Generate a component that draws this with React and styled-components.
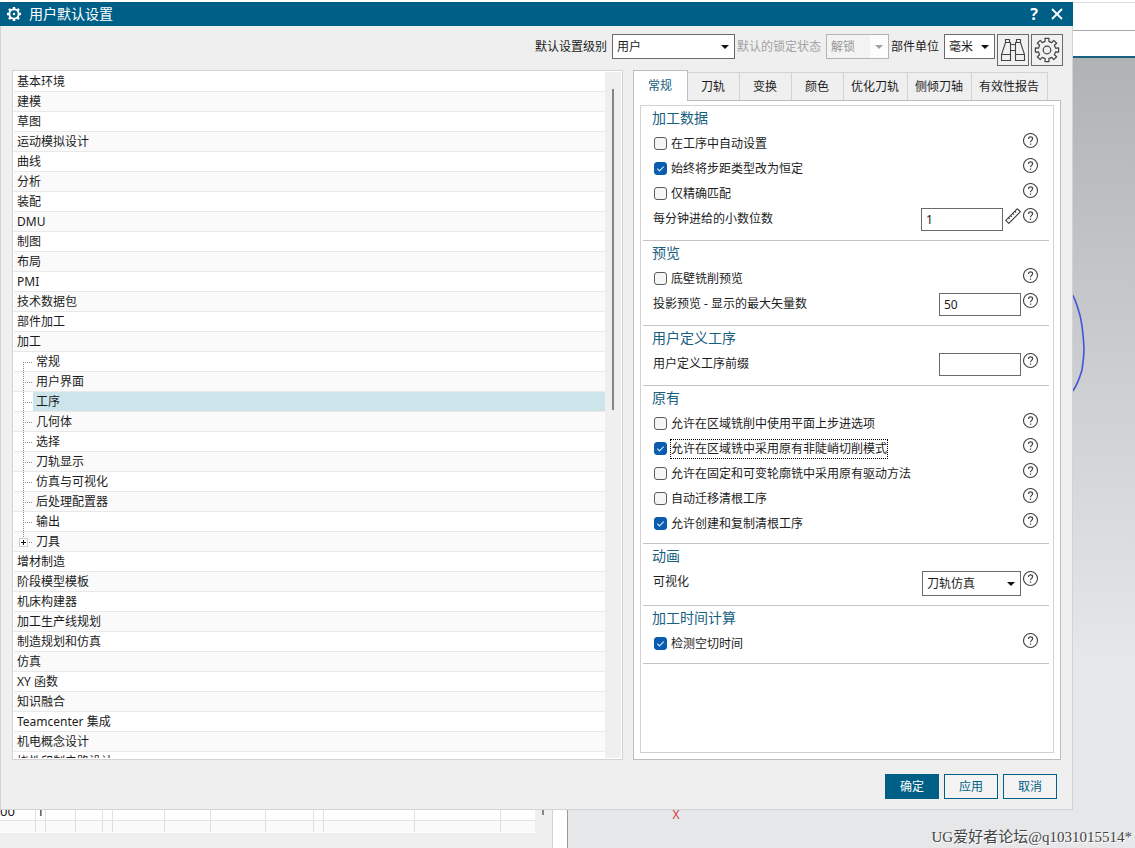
import React from "react";
import styled, { createGlobalStyle, css } from "styled-components";

const color = {
  accent: "#005f87",
  heading: "#17607f",
  text: "#1c1c1c",
  face: "#efefef",
  line: "#d2d2d2",
  field: "#6a6a6a",
};

const GlobalStyle = createGlobalStyle`
  * { box-sizing: border-box; }
  body {
    margin: 0;
    overflow: hidden;
    font: 12px/16px "Noto Sans", "Noto Sans CJK SC", sans-serif;
    color: ${color.text};
  }
  button, input, select { font: inherit; color: inherit; margin: 0; }
`;

/* ---------- application behind the dialog ---------- */

const Desktop = styled.div`
  display: grid;
  grid-template: minmax(0, 1fr) / minmax(0, 1fr);
  height: 100vh;
  & > * { grid-area: 1 / 1; }
`;

const Backdrop = styled.div`
  display: flex;
  flex-direction: column;
  min-height: 0;
  background: #fff;
`;

const Ribbon = styled.div`
  height: 29px;
  flex: none;
  margin-top: 2px;
  border-top: 1px solid #dcdcdc;
  border-bottom: 1px solid #a8a8a8;
`;

const RibbonBottom = styled.div`
  height: 27px;
  flex: none;
  border-bottom: 2px solid #17607f;
`;

const Workspace = styled.div`
  flex: 1;
  min-height: 0;
  display: flex;
`;

const Navigator = styled.div`
  flex: 0 0 50%;
  display: flex;
  align-items: stretch;
`;

const NavTable = styled.div`
  flex: 1;
  display: flex;
  flex-direction: column;
  justify-content: flex-end;
  padding-bottom: 15px;
  background: ${color.face};
`;

const NavRow = styled.div`
  display: grid;
  grid-template-columns: 36px 10px 30px 27px 10px 52px 46px 55px 48px 10px 91px 86px 1fr;
  height: ${(p) => (p.$last ? 12 : 20)}px;
  background: ${(p) => (p.$last ? "#fafafa" : "#fff")};
  border-bottom: 1px solid ${(p) => (p.$last ? "#fff" : "#e4e4e4")};
  font-size: 13px;
  line-height: 20px;
`;

const NavCell = styled.span`
  border-right: 1px solid #e0e0e0;
  overflow: hidden;
  text-align: ${(p) => (p.$center ? "center" : "left")};
  &:last-child { border-right: 0; }
`;

const NavScroll = styled.div`
  width: 17px;
  background: ${color.face};
  display: flex;
  justify-content: center;
  align-items: flex-end;
  padding-bottom: 33px;
  &::before {
    content: "";
    width: 2px;
    height: 200px;
    background: #888;
  }
`;

const NavEdge = styled.div`
  width: 16px;
  background: #fff;
  border-left: 1px solid ${color.line};
  border-right: 1px solid #9a9a9a;
`;

const Viewport = styled.div`
  flex: 1;
  position: relative;
  background: linear-gradient(#b1b2b4, #dcdde0 62%, #e6e7e9 76%);
`;

const SketchArc = styled.svg`
  position: absolute;
  right: 45px;
  top: 230px;
`;

const AxisLabel = styled.span`
  position: absolute;
  left: 105px;
  bottom: 25px;
  font-size: 12px;
  color: #d03c3c;
`;

const Watermark = styled.span`
  position: absolute;
  right: 3px;
  bottom: 1px;
  font: 15px/20px "Liberation Serif", "Noto Sans CJK SC", serif;
  color: #444;
  text-shadow: 1px 1px 0 #fff;
  white-space: nowrap;
`;

/* ---------- dialog frame ---------- */

const Dialog = styled.form`
  display: flex;
  flex-direction: column;
  min-height: 0;
  margin: 2px 62px 38px 0;
  background: ${color.face};
  border: solid ${color.line};
  border-width: 0 1px 1px;
  z-index: 1;
`;

const TitleBar = styled.header`
  display: flex;
  align-items: center;
  flex: none;
  height: 24px;
  margin: 0 -1px;
  padding: 0 8px 0 6px;
  background: ${color.accent};
  color: #fff;
`;

const Title = styled.h1`
  flex: 1;
  margin: 0 0 0 7px;
  font-size: 14px;
  font-weight: 400;
  line-height: 24px;
`;

const TitleButton = styled.button`
  display: grid;
  place-items: center;
  width: 16px;
  height: 20px;
  margin-left: 7px;
  padding: 0;
  border: 0;
  background: none;
  font-size: 16px;
  font-weight: 700;
  line-height: 20px;
`;

const Toolbar = styled.div`
  display: flex;
  justify-content: flex-end;
  align-items: flex-start;
  gap: 2px;
  flex: none;
  padding: 8px 9px 4px;
`;

const ToolLabel = styled.label`
  display: flex;
  align-items: center;
  gap: 5px;
  height: 25px;
  white-space: nowrap;
  color: ${(p) => (p.$disabled ? "#a2a2a2" : "inherit")};
`;

const ToolButton = styled.button`
  width: 32px;
  height: 32px;
  padding: 0;
  border: 1px solid ${color.field};
  background: #f1f1f1;
  svg { display: block; }
`;

const SelectBox = styled.span`
  display: grid;
  align-items: center;
  width: ${(p) => p.$width}px;
  & > * { grid-area: 1 / 1; }
  svg {
    justify-self: end;
    margin-right: 6px;
    pointer-events: none;
  }
`;

const SelectField = styled.select`
  appearance: none;
  width: 100%;
  height: 25px;
  padding: 0 4px;
  border: 1px solid ${color.field};
  border-radius: 0;
  background: #fff;
  &:disabled {
    border-color: #b4b4b4;
    background: linear-gradient(to right, #f3f3f3 70%, #fcfcfc 70%);
    color: #969696;
    opacity: 1;
  }
`;

const Panels = styled.div`
  flex: 1;
  min-height: 0;
  display: grid;
  grid-template: minmax(0, 1fr) / minmax(0, 1fr) 428px;
  gap: 10px;
  padding: 0 11px;
`;

const Footer = styled.footer`
  display: flex;
  justify-content: flex-end;
  gap: 5px;
  flex: none;
  padding: 14px 15px 10px;
`;

const ActionButton = styled.button`
  width: 54px;
  height: 25px;
  padding: 0;
  border: 1px solid ${color.accent};
  background: ${(p) => (p.$primary ? color.accent : "#f3f3f3")};
  color: ${(p) => (p.$primary ? "#fff" : color.accent)};
`;

/* ---------- category tree ---------- */

const TreePanel = styled.div`
  display: flex;
  min-height: 0;
  padding: 1px;
  border: 1px solid ${color.line};
  background: #fff;
`;

const TreeList = styled.ul`
  flex: 1;
  min-width: 0;
  margin: 0;
  padding: 0;
  list-style: none;
  overflow: hidden;
`;

const TreeRow = styled.li`
  display: flex;
  height: 20px;
  border-bottom: 1px solid #e9e9e9;
  line-height: 19px;
  &:nth-child(even) { background: #fafafa; }
`;

const TreeLabel = styled.span`
  flex: 1;
  padding-left: 3px;
  margin-left: ${(p) => (p.$child ? 1 : 0)}px;
  background: ${(p) => (p.$selected ? "#cde5ea" : "none")};
`;

const dots = "#8c8c8c 0 1px, transparent 1px 2px";

const Guide = styled.span`
  display: flex;
  align-items: center;
  width: 13px;
  height: 20px;
  margin-left: 5px;
  background-image:
    repeating-linear-gradient(to bottom, ${dots}),
    repeating-linear-gradient(to right, ${dots});
  background-repeat: no-repeat;
  background-size: 1px 20px, 9px 1px;
  background-position: 4px 0, 4px 10px;
  ${(p) => p.$first && css`
    background-size: 1px 10px, 9px 1px;
    background-position: 4px 10px, 4px 10px;
  `}
  ${(p) => p.$last && css`
    background-size: 1px 10px, 9px 1px;
  `}
`;

const Expander = styled.button`
  display: block;
  width: 9px;
  height: 9px;
  padding: 0;
  border: 1px solid #cfcfcf;
  background: #fff;
  svg { display: block; }
`;

const TreeScroll = styled.div`
  width: 16px;
  padding: 17px 0 0 7px;
  background: ${color.face};
  &::before {
    content: "";
    display: block;
    width: 2px;
    height: 48%;
    background: #858585;
  }
`;

/* ---------- settings pane ---------- */

const SettingsPanel = styled.div`
  display: flex;
  flex-direction: column;
  min-height: 0;
`;

const TabStrip = styled.div`
  display: flex;
  align-items: flex-end;
  flex: none;
  height: 31px;
  z-index: 1;
`;

const Tab = styled.button`
  min-width: 52px;
  height: 28px;
  margin-bottom: 1px;
  padding: 0 8px 0 7px;
  border: solid ${color.line};
  border-width: 1px 1px 0 0;
  background: ${color.face};
  white-space: nowrap;
  ${(p) => p.$active && css`
    width: 55px;
    height: 31px;
    margin-bottom: 0;
    border-color: #bdbdbd;
    border-width: 1px 1px 0 1px;
    background: #fff;
    color: ${color.heading};
  `}
`;

const TabBody = styled.div`
  flex: 1;
  min-height: 0;
  display: flex;
  margin-top: -1px;
  padding: 4px 6px 6px;
  border: 1px solid #bdbdbd;
  background: #fff;
`;

const SettingsFrame = styled.div`
  flex: 1;
  padding: 0 4px 0 2px;
  border: 1px solid ${color.line};
  overflow: hidden;
`;

const Section = styled.section`
  padding: 0 10px 7px 9px;
  border-bottom: 1px solid #c4c4c4;
`;

const SectionTitle = styled.h2`
  margin: 0;
  padding-bottom: 2px;
  font-size: 14px;
  font-weight: 400;
  line-height: 23px;
  color: ${color.heading};
`;

const SettingRow = styled.div`
  display: flex;
  align-items: flex-start;
  gap: 2px;
`;

const FieldLabel = styled.label`
  flex: 1;
  padding-left: 1px;
  line-height: 25px;
`;

const Control = styled.span`
  padding: 2px 0;
`;

const TextField = styled.input`
  display: block;
  width: 82px;
  height: 23px;
  padding: 0 4px;
  border: 1px solid ${color.field};
  border-radius: 0;
  background: #fff;
`;

const CheckLabel = styled.label`
  display: flex;
  align-items: center;
  gap: 4px;
  height: 25px;
  margin-right: auto;
  padding-left: 2px;
`;

const CheckBox = styled.span`
  display: grid;
  & > * { grid-area: 1 / 1; }
  svg { pointer-events: none; }
`;

const CheckInput = styled.input`
  appearance: none;
  width: 13px;
  height: 13px;
  border: 1px solid #5c5c5c;
  border-radius: 3px;
  background: #f5f5f5;
  &:checked {
    border-color: #0a5cb0;
    background: #0a5cb0;
  }
`;

const CheckText = styled.span`
  line-height: 18px;
  ${(p) => p.$focused && css`
    outline: 1px dotted #000;
  `}
`;

const IconButton = styled.button`
  width: 16px;
  height: 16px;
  margin-top: 2px;
  padding: 0;
  border: 0;
  background: none;
  svg { display: block; }
`;

/* ---------- icons ---------- */

function gearPoints(cx, cy, inner, outer) {
  const points = [];
  for (let i = 0; i < 8; i += 1) {
    [[-12, inner], [-10, outer], [10, outer], [12, inner]].forEach(([deg, r]) => {
      const a = ((i * 45 + deg) * Math.PI) / 180;
      points.push(`${(cx + r * Math.cos(a)).toFixed(2)},${(cy + r * Math.sin(a)).toFixed(2)}`);
    });
  }
  return points.join(" ");
}

const TitleGear = () => (
  <svg width="16" height="16" viewBox="0 0 16 16" aria-hidden="true">
    <polygon points={gearPoints(8, 8, 5.6, 7.2)} fill="#fff" />
    <circle cx="8" cy="8" r="3.7" fill={color.accent} />
    <circle cx="8" cy="8" r="1.2" fill="#fff" />
  </svg>
);

const GearIcon = () => (
  <svg width="30" height="30" viewBox="0 0 30 30" fill="none" stroke="#444" strokeWidth="1.2" strokeLinejoin="round" aria-hidden="true">
    <polygon points={gearPoints(15, 15, 8.8, 11.8)} />
    <circle cx="15" cy="15" r="3.8" />
  </svg>
);

const BinocularsIcon = () => (
  <svg width="30" height="30" viewBox="0 0 30 30" fill="none" stroke="#444" strokeWidth="1.1" aria-hidden="true">
    <path d="M7.500 7.500v-3h4v3M12.500 25.500v-18h-5L3.500 19.500v6zM3.500 19.500h9M22.500 7.500v-3h-4v3M17.500 25.500v-18h5L26.500 19.500v6zM26.500 19.500h-9M12.500 9.500h5M12.500 15.500h5" />
  </svg>
);

const ArrowIcon = ({ fill = "#111" }) => (
  <svg width="8" height="4" viewBox="0 0 8 4" aria-hidden="true">
    <path d="M0 0h8L4 4z" fill={fill} />
  </svg>
);

const HelpIcon = () => (
  <svg width="16" height="16" viewBox="0 0 16 16" fill="none" stroke="#444" aria-hidden="true">
    <circle cx="7.5" cy="7.5" r="7" strokeWidth="1.1" />
    <path d="M5.500 5.900C5.500 4.600 6.300 3.900 7.500 3.900s2.100.7 2.100 1.800c0 1.700-2.100 1.700-2.100 3.600" strokeWidth="1.200" />
    <path d="M7.500 10.500v1.300" strokeWidth="1.300" />
  </svg>
);

const RulerIcon = () => (
  <svg width="16" height="16" viewBox="0 0 16 16" fill="none" stroke="#444" strokeWidth="1.2" strokeLinejoin="round" aria-hidden="true">
    <path d="M.8 12.300 12.200.8l3.200 2.900L3.800 15.300z" />
    <path d="M3.400 9.700l1.300 1.200M5.500 7.600l1.300 1.200M7.600 5.400l1.300 1.200M9.800 3.300l1.300 1.200" />
  </svg>
);

const CloseIcon = () => (
  <svg width="12" height="12" viewBox="0 0 12 12" stroke="#fff" strokeWidth="1.800" aria-hidden="true">
    <path d="M1 1l10 10M11 1L1 11" />
  </svg>
);

/* ---------- data ---------- */

const beforeMachining = [
  "基本环境", "建模", "草图", "运动模拟设计", "曲线", "分析", "装配", "DMU", "制图",
  "布局", "PMI", "技术数据包", "部件加工", "加工",
];
const machining = [
  "常规", "用户界面", "工序", "几何体", "选择", "刀轨显示", "仿真与可视化",
  "后处理配置器", "输出", "刀具",
];
const afterMachining = [
  "增材制造", "阶段模型模板", "机床构建器", "加工生产线规划", "制造规划和仿真", "仿真",
  "XY 函数", "知识融合", "Teamcenter 集成", "机电概念设计", "挠性印制电路设计",
];
const categories = [
  ...beforeMachining.map((name) => ({ name })),
  ...machining.map((name, i) => ({
    name,
    child: true,
    first: i === 0,
    last: i === machining.length - 1,
    selected: name === "工序",
  })),
  ...afterMachining.map((name) => ({ name })),
];

const tabs = ["常规", "刀轨", "变换", "颜色", "优化刀轨", "侧倾刀轴", "有效性报告"];

const sections = [
  {
    title: "加工数据",
    rows: [
      { type: "check", label: "在工序中自动设置" },
      { type: "check", label: "始终将步距类型改为恒定", checked: true },
      { type: "check", label: "仅精确匹配" },
      { type: "text", label: "每分钟进给的小数位数", value: "1", ruler: true },
    ],
  },
  {
    title: "预览",
    rows: [
      { type: "check", label: "底壁铣削预览" },
      { type: "text", label: "投影预览 - 显示的最大矢量数", value: "50" },
    ],
  },
  {
    title: "用户定义工序",
    rows: [{ type: "text", label: "用户定义工序前缀", value: "" }],
  },
  {
    title: "原有",
    rows: [
      { type: "check", label: "允许在区域铣削中使用平面上步进选项" },
      { type: "check", label: "允许在区域铣中采用原有非陡峭切削模式", checked: true, focused: true },
      { type: "check", label: "允许在固定和可变轮廓铣中采用原有驱动方法" },
      { type: "check", label: "自动迁移清根工序" },
      { type: "check", label: "允许创建和复制清根工序", checked: true },
    ],
  },
  {
    title: "动画",
    rows: [{ type: "select", label: "可视化", value: "刀轨仿真" }],
  },
  {
    title: "加工时间计算",
    rows: [{ type: "check", label: "检测空切时间", checked: true }],
  },
];

/* ---------- composed parts ---------- */

function Select({ id, value, width, disabled }) {
  return (
    <SelectBox $width={width}>
      <SelectField id={id} defaultValue={value} disabled={disabled}>
        <option>{value}</option>
      </SelectField>
      <ArrowIcon fill={disabled ? "#a0a0a0" : "#111"} />
    </SelectBox>
  );
}

function Check({ label, checked, focused }) {
  return (
    <CheckLabel>
      <CheckBox>
        <CheckInput type="checkbox" defaultChecked={checked} />
        {checked && (
          <svg width="13" height="13" viewBox="0 0 13 13" fill="none" stroke="#d8e9fa" strokeWidth="1.100" aria-hidden="true">
            <path d="M3.300 6.700l2.200 2.200 4.200-4.200" />
          </svg>
        )}
      </CheckBox>
      <CheckText $focused={focused}>{label}</CheckText>
    </CheckLabel>
  );
}

function Setting({ row, id }) {
  return (
    <SettingRow>
      {row.type === "check" ? <Check {...row} /> : <FieldLabel htmlFor={id}>{row.label}</FieldLabel>}
      {row.type === "text" && <Control><TextField id={id} type="text" defaultValue={row.value} /></Control>}
      {row.type === "select" && <Control><Select id={id} value={row.value} width={99} /></Control>}
      {row.ruler && <IconButton type="button" aria-label="测量"><RulerIcon /></IconButton>}
      <IconButton type="button" aria-label="帮助"><HelpIcon /></IconButton>
    </SettingRow>
  );
}

function Background() {
  return (
    <Backdrop>
      <Ribbon />
      <RibbonBottom />
      <Workspace>
        <Navigator>
          <NavTable>
            {[false, true].map((last) => (
              <NavRow key={String(last)} $last={last}>
                {Array.from({ length: 13 }, (_, i) => (
                  <NavCell key={i} $center={i === 1}>
                    {!last && i === 0 ? "00" : !last && i === 1 ? "1" : ""}
                  </NavCell>
                ))}
              </NavRow>
            ))}
          </NavTable>
          <NavScroll />
          <NavEdge />
        </Navigator>
        <Viewport>
          <SketchArc width="18" height="110" viewBox="0 0 18 110" fill="none" stroke="#3f55d8" strokeWidth="1.600" aria-hidden="true">
            <path d="M0 6 C3 11 5 17 7 24 C10 33 11 43 12 60 C12 68 11 75 10 82 C7 92 5 98 0 104" />
          </SketchArc>
          <AxisLabel>X</AxisLabel>
          <Watermark>UG爱好者论坛@q1031015514*</Watermark>
        </Viewport>
      </Workspace>
    </Backdrop>
  );
}

export default function App() {
  return (
    <>
      <GlobalStyle />
      <Desktop>
        <Background />
        <Dialog onSubmit={(e) => e.preventDefault()}>
          <TitleBar>
            <TitleGear />
            <Title>用户默认设置</Title>
            <TitleButton type="button" aria-label="帮助">?</TitleButton>
            <TitleButton type="button" aria-label="关闭"><CloseIcon /></TitleButton>
          </TitleBar>
          <Toolbar>
            <ToolLabel>默认设置级别<Select value="用户" width={123} /></ToolLabel>
            <ToolLabel $disabled>默认的锁定状态<Select value="解锁" width={63} disabled /></ToolLabel>
            <ToolLabel>部件单位<Select value="毫米" width={51} /></ToolLabel>
            <ToolButton type="button" aria-label="查找"><BinocularsIcon /></ToolButton>
            <ToolButton type="button" aria-label="管理设置"><GearIcon /></ToolButton>
          </Toolbar>
          <Panels>
            <TreePanel>
              <TreeList>
                {categories.map((c) => (
                  <TreeRow key={`${c.name}${c.child ? "-sub" : ""}`}>
                    {c.child && (
                      <Guide $first={c.first} $last={c.last}>
                        {c.last && (
                          <Expander type="button" aria-label="展开">
                            <svg width="7" height="7" viewBox="0 0 7 7" stroke="#111" aria-hidden="true">
                              <path d="M1 3.5h5M3.5 1v5" />
                            </svg>
                          </Expander>
                        )}
                      </Guide>
                    )}
                    <TreeLabel $child={c.child} $selected={c.selected}>{c.name}</TreeLabel>
                  </TreeRow>
                ))}
              </TreeList>
              <TreeScroll />
            </TreePanel>
            <SettingsPanel>
              <TabStrip role="tablist">
                {tabs.map((name, i) => (
                  <Tab key={name} type="button" role="tab" aria-selected={i === 0} $active={i === 0}>{name}</Tab>
                ))}
              </TabStrip>
              <TabBody>
                <SettingsFrame>
                  {sections.map((section, s) => (
                    <Section key={section.title}>
                      <SectionTitle>{section.title}</SectionTitle>
                      {section.rows.map((row, r) => (
                        <Setting key={row.label} row={row} id={`setting-${s}-${r}`} />
                      ))}
                    </Section>
                  ))}
                </SettingsFrame>
              </TabBody>
            </SettingsPanel>
          </Panels>
          <Footer>
            <ActionButton type="submit" $primary>确定</ActionButton>
            <ActionButton type="button">应用</ActionButton>
            <ActionButton type="button">取消</ActionButton>
          </Footer>
        </Dialog>
      </Desktop>
    </>
  );
}
